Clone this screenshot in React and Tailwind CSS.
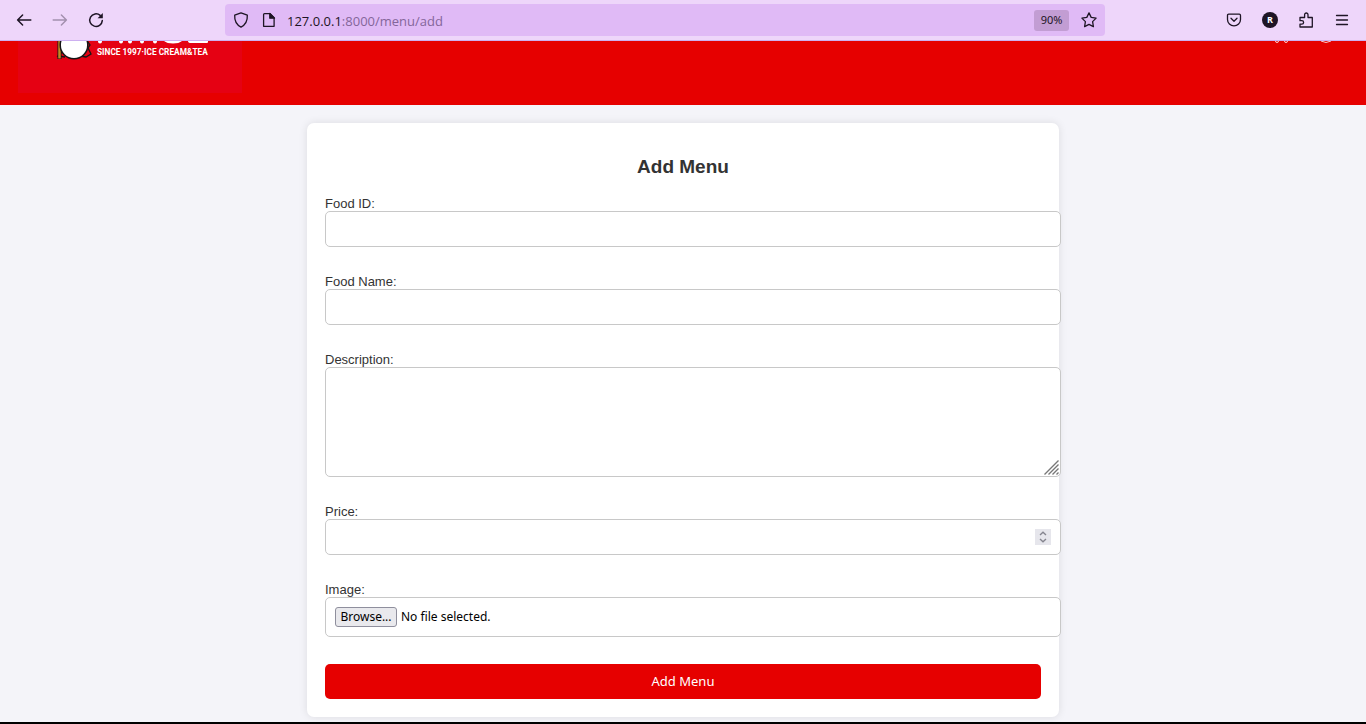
import React, { useRef, useState } from "react";

const inputBox = "w-full rounded-[5px] border border-[#c8c8c8] bg-white";

function NavButton({ label, className = "", children }) {
  return (
    <button type="button" aria-label={label} className={`flex size-5 shrink-0 items-center justify-center ${className}`}>
      {children}
    </button>
  );
}

function Icon({ children }) {
  return (
    <svg
      viewBox="0 0 16 16"
      className="size-4"
      fill="none"
      stroke="currentColor"
      strokeWidth="1.3"
      strokeLinecap="round"
      strokeLinejoin="round"
      aria-hidden="true"
    >
      {children}
    </svg>
  );
}

function BrowserBar() {
  return (
    <div className="flex h-[41px] shrink-0 items-center border-b border-[#cdb0f0] bg-[#eed6fa] text-[#1e1525]">
      <div className="flex w-[225px] shrink-0 items-center gap-4 pl-3.5">
        <NavButton label="Back">
          <Icon><path d="M14.8 8H1.6M6.6 3L1.6 8l5 5" strokeWidth="1.5" /></Icon>
        </NavButton>
        <NavButton label="Forward" className="text-[#a391ae]">
          <Icon><path d="M1.2 8h13.2M9.4 3l5 5-5 5" strokeWidth="1.5" /></Icon>
        </NavButton>
        <NavButton label="Reload">
          <Icon>
            <path d="M12.2 3.4A6.3 6.3 0 1 0 14.3 8.6" strokeWidth="1.5" />
            <path d="M14.8 1v5.2H9.6z" fill="currentColor" stroke="none" />
          </Icon>
        </NavButton>
      </div>
      <div className="flex h-8 flex-1 items-center rounded bg-[#e0baf6] px-1.5">
        <NavButton label="Site protections">
          <Icon><path d="M8 .9l6.3 2.3c.3 4.8-1 9-6.3 11.9C2.7 12.2 1.4 8 1.7 3.2z" /></Icon>
        </NavButton>
        <NavButton label="Site information" className="ml-2">
          <Icon>
            <path d="M3.500 1.700h5.600l4 4v8.600H2.600V2.600c0-.5.4-.9.9-.9z" />
            <path d="M8.800 1.500v4.700h4.700z" fill="currentColor" />
          </Icon>
        </NavButton>
        <div className="relative ml-2 flex-1 pt-0.5 font-['Open_Sans','Noto_Sans',sans-serif] text-[13px] leading-5 text-[#84669a]">
          <input aria-label="Address" type="text" className="absolute inset-0 w-full bg-transparent outline-none" />
          <p className="pointer-events-none">
            <span className="text-[#1e1525]">127.0.0.1</span>:8000/menu/add
          </p>
        </div>
        <button
          type="button"
          className="h-[21px] w-[35px] rounded-[3px] bg-[#c29dd3] font-['Noto_Sans','Open_Sans',sans-serif] text-[11px]"
        >
          90%
        </button>
        <NavButton label="Bookmark this page" className="ml-2.5">
          <Icon><path d="M8 .9l2.2 4.5 4.9.7-3.5 3.5.8 5L8 12.3l-4.4 2.3.8-5L.9 6.100l4.900-.7z" /></Icon>
        </NavButton>
      </div>
      <div className="flex w-[261px] shrink-0 items-center justify-end gap-4 pr-3.5">
        <NavButton label="Save to Pocket">
          <Icon>
            <path d="M2.7 2.2h10.6c.7 0 1.2.5 1.2 1.2v4c0 3.6-2.9 6.4-6.5 6.4S1.5 11 1.5 7.4v-4c0-.7.5-1.2 1.2-1.2z" />
            <path d="M5 6.3l3 2.9 3-2.9" />
          </Icon>
        </NavButton>
        <button
          type="button"
          aria-label="Profile R"
          className="mx-0.5 flex size-4 items-center justify-center rounded-full bg-[#1e1525] font-['Open_Sans',sans-serif] text-[9px] font-bold text-white"
        >
          R
        </button>
        <NavButton label="Extensions">
          <Icon><path d="M2 15h12.300V5.500H10V2.800C10 .4 6.600.4 6.600 2.800v2.700H2v3.200h1.800c2.400 0 2.400 3.400 0 3.400H2z" /></Icon>
        </NavButton>
        <NavButton label="Menu">
          <Icon><path d="M2.500 3.500h11M2.500 8h11M2.500 12.500h11" /></Icon>
        </NavButton>
      </div>
    </div>
  );
}

function SiteHeader() {
  return (
    <header className="flex h-16 shrink-0 items-start justify-between bg-[#e60000] px-[18px]">
      <a href="/" aria-label="Home" className="block bg-[#e50113]">
        <svg viewBox="0 0 224 52" className="h-[52px] w-56" aria-hidden="true">
          <path d="M44 11l-4 4 7 1M68 2l2-1 2 3-2 3 3 6-5 3-6-1" fill="#e50113" stroke="#151515" strokeWidth="1.3" />
          <path d="M41.500 0v18" stroke="#151515" strokeWidth="4" />
          <path d="M41.500 0v17.500" stroke="#c28a25" strokeWidth="2.5" />
          <circle cx="56" cy="4" r="13.8" fill="#fff" stroke="#151515" strokeWidth="1.5" />
          <path
            d="M82 -1v1.500M103 -1v1.500M112 -1v1.500M124 -1v1.500M137 -1v1.500"
            stroke="#fff"
            strokeWidth="4"
            strokeLinecap="round"
          />
          <path d="M146 0h18q-3 2.500-9 2.500T146 0zM170 0h20v1q0 1-1 1h-16q-3 0-3-2z" fill="#fff" />
          <text x="79" y="13.5" fill="#fff" fontFamily="Roboto, sans-serif" fontSize="8.3" fontWeight="700">
            SINCE 1997·ICE CREAM&amp;TEA
          </text>
        </svg>
      </a>
      <svg viewBox="0 0 80 3" className="h-[3px] w-20" fill="none" stroke="#fff" strokeOpacity="0.8" aria-hidden="true">
        <circle cx="9" cy="0" r="1.5" />
        <circle cx="18" cy="0" r="1.5" />
        <path d="M53 0q5 3 10 0" />
      </svg>
    </header>
  );
}

function Field({ id, label, children }) {
  return (
    <div className="-mr-5 mb-[27px]">
      <label htmlFor={id} className="block text-[13px] leading-[15px]">{label}</label>
      {children}
    </div>
  );
}

function PriceInput() {
  const ref = useRef(null);
  return (
    <div className={`${inputBox} flex h-9 items-center pr-[9px] pl-2`}>
      <input
        ref={ref}
        id="price"
        type="number"
        className="min-w-0 flex-1 outline-none [appearance:textfield] [&::-webkit-inner-spin-button]:appearance-none"
      />
      <div className="flex size-4 flex-col bg-[#e6e6ec] text-[#85858f]">
        <button type="button" aria-label="Increase price" onClick={() => ref.current.stepUp()} className="h-2">
          <svg viewBox="0 0 16 8" className="h-2 w-4" fill="none" stroke="currentColor" strokeWidth="1.4" aria-hidden="true">
            <path d="M5 6l3-2.700L11 6" />
          </svg>
        </button>
        <button type="button" aria-label="Decrease price" onClick={() => ref.current.stepDown()} className="h-2">
          <svg viewBox="0 0 16 8" className="h-2 w-4" fill="none" stroke="currentColor" strokeWidth="1.4" aria-hidden="true">
            <path d="M5 2l3 2.700L11 2" />
          </svg>
        </button>
      </div>
    </div>
  );
}

function FilePicker() {
  const ref = useRef(null);
  const [name, setName] = useState("No file selected.");
  return (
    <div className={`${inputBox} flex h-10 items-center gap-1 px-[9px] font-['Noto_Sans','Open_Sans',sans-serif] text-[12px] text-black`}>
      <input
        ref={ref}
        id="image"
        type="file"
        className="hidden"
        onChange={(e) => setName(e.target.files[0]?.name ?? "No file selected.")}
      />
      <button
        type="button"
        onClick={() => ref.current.click()}
        className="h-5 w-[62px] rounded-[3px] border border-[#8f8f9d] bg-[#e9e9ed] leading-[18px]"
      >
        Browse...
      </button>
      <span>{name}</span>
    </div>
  );
}

function AddMenuForm() {
  return (
    <form
      className="rounded-[7px] bg-white p-[18px] shadow-[0_0_9px_rgba(0,0,0,0.1)]"
      onSubmit={(e) => e.preventDefault()}
    >
      <h2 className="mt-[15px] mb-[19px] text-center text-[19px] leading-[21px] font-bold">Add Menu</h2>
      <Field id="food-id" label="Food ID:">
        <input id="food-id" type="text" className={`${inputBox} block h-9 px-2`} />
      </Field>
      <Field id="food-name" label="Food Name:">
        <input id="food-name" type="text" className={`${inputBox} block h-9 px-2`} />
      </Field>
      <Field id="description" label="Description:">
        <div className="relative">
          <textarea
            id="description"
            className={`${inputBox} block h-[110px] resize-y p-2 [&::-webkit-resizer]:hidden`}
          />
          <svg
            viewBox="0 0 15 15"
            className="pointer-events-none absolute right-0.5 bottom-0.5 size-[15px]"
            stroke="#777"
            strokeWidth="1.4"
            aria-hidden="true"
          >
            <path d="M.5 14.500L14.500 .5M4.500 14.500L14.500 4.500M8.500 14.500L14.500 8.500M12.500 14.500l2-2" />
          </svg>
        </div>
      </Field>
      <Field id="price" label="Price:">
        <PriceInput />
      </Field>
      <Field id="image" label="Image:">
        <FilePicker />
      </Field>
      <button
        type="submit"
        className="block h-[35px] w-full rounded-[5px] bg-[#e60000] font-['Noto_Sans','Open_Sans',sans-serif] text-[13px] text-white"
      >
        Add Menu
      </button>
    </form>
  );
}

export default function App() {
  return (
    <div className="flex min-h-screen flex-col bg-[#f4f4f9] font-['Liberation_Sans',Arial,sans-serif] text-[#333]">
      <BrowserBar />
      <SiteHeader />
      <main className="mx-auto w-full max-w-[752px] flex-1 pt-[18px] pb-[5px]">
        <AddMenuForm />
      </main>
      <div className="h-0.5 bg-black" />
    </div>
  );
}
